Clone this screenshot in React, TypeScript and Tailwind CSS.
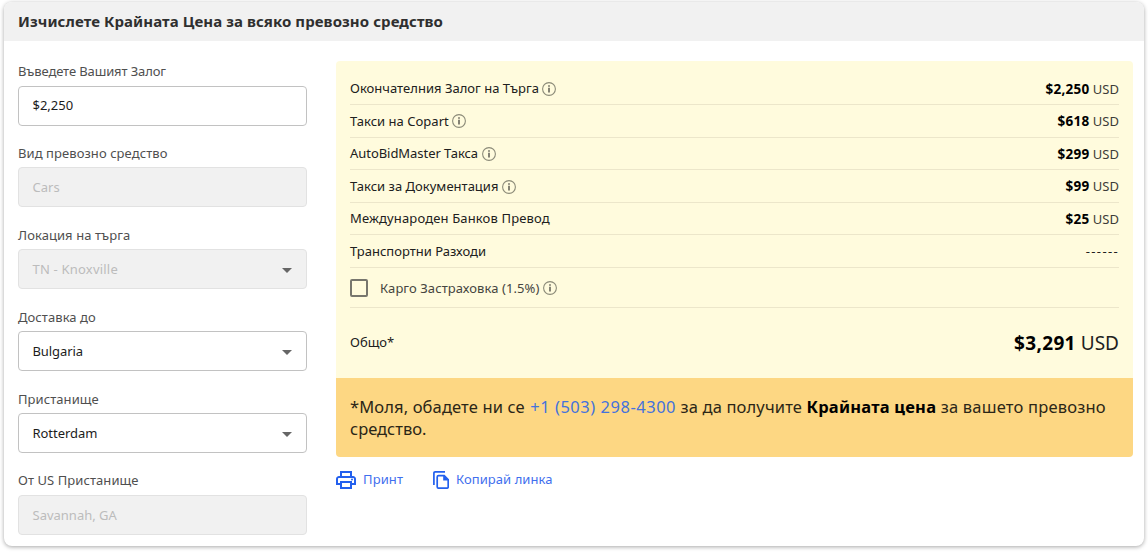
import { ReactNode } from "react";

function InfoIcon() {
  return (
    <svg className="ml-[3.5px] h-[14px] w-[14px] shrink-0" viewBox="0 0 14 14" fill="none">
      <circle cx="7" cy="7" r="6.4" stroke="#8b8a78" strokeWidth="1.1" />
      <path d="M7 5.7v4.8" stroke="#66655a" strokeWidth="1.6" />
      <path d="M7 3.3v1.5" stroke="#66655a" strokeWidth="1.6" />
    </svg>
  );
}

type FieldProps = {
  label: string;
  labelClass?: string;
  value: string;
  valueClass?: string;
  disabled?: boolean;
  select?: boolean;
};

function Field({ label, labelClass = "tracking-[0.07px]", value, valueClass = "", disabled, select }: FieldProps) {
  return (
    <div className="h-[81.9px]">
      <div className="flex h-[24.5px] items-start text-[13px] leading-[20px] text-[#4f4f4f]">
        <span className={labelClass}>{label}</span>
      </div>
      <div
        className={`flex h-[40px] w-[288.5px] items-center justify-between rounded-[4px] border pr-[14px] pl-[13.5px] text-[13px] ${
          disabled ? "border-[#e2e2e2] bg-[#f1f1f1] text-[#bcbcbc]" : "border-[#c2c2c2] bg-white text-[#1c1c1c]"
        }`}
      >
        <span className={`pt-px ${valueClass}`}>{value}</span>
        {select && (
          <svg className="mt-[2px] h-[5px] w-[10px]" viewBox="0 0 10 5">
            <path d="M0 0h10L5 5z" fill="#666" />
          </svg>
        )}
      </div>
    </div>
  );
}

type RowProps = { label: string; labelClass?: string; info?: boolean; children: ReactNode };

function Row({ label, labelClass = "tracking-[0.02px]", info, children }: RowProps) {
  return (
    <div className="flex h-[32.6px] items-center justify-between border-b border-[#ece6ca] text-[13px] text-[#202020]">
      <div className="flex items-center pt-px">
        <span className={labelClass}>{label}</span>
        {info && <InfoIcon />}
      </div>
      <div className="pt-px whitespace-nowrap">{children}</div>
    </div>
  );
}

function Price({ amount }: { amount: string }) {
  return (
    <span>
      <b className="text-[13.5px] font-bold tracking-[0.25px] text-black">{amount}</b>{" "}
      <span className="text-[#3c3c38]">USD</span>
    </span>
  );
}

export default function App() {
  return (
    <div className="h-[552px] w-[1148px] overflow-hidden bg-white pt-[2px] pl-[4px] font-['Noto_Sans','Open_Sans',sans-serif]">
      <div className="h-[544px] w-[1140px] overflow-hidden rounded-[8px] bg-white shadow-[0_1px_4px_rgba(0,0,0,0.35)]">
        <div className="flex h-[39px] items-center bg-[#f1f1f1] pl-[14px] text-[15px] font-bold tracking-[0.08px] text-[#2f2f2f]">
          <span>Изчислете Крайната Цена за всяко превозно средство</span>
        </div>
        <div className="flex pl-[14px]">
          <div className="w-[289px] pt-[20px]">
            <Field label="Въведете Вашият Залог" labelClass="tracking-[-0.12px]" value="$2,250" />
            <Field label="Вид превозно средство" value="Cars" disabled />
            <Field label="Локация на търга" value="TN - Knoxville" valueClass="tracking-[0.2px]" disabled select />
            <Field label="Доставка до" value="Bulgaria" valueClass="tracking-[-0.1px]" select />
            <Field label="Пристанище" value="Rotterdam" valueClass="tracking-[-0.05px]" select />
            <Field label="От US Пристанище" value="Savannah, GA" disabled />
          </div>
          <div className="ml-[29px] w-[797px] pt-[20px]">
            <div className="h-[317px] rounded-t-[4px] bg-[#fffbdd] px-[14px] pt-[11.5px]">
              <Row label="Окончателния Залог на Търга" info><Price amount="$2,250" /></Row>
              <Row label="Такси на Copart" info><Price amount="$618" /></Row>
              <Row label="AutoBidMaster Такса" labelClass="tracking-[-0.05px]" info><Price amount="$299" /></Row>
              <Row label="Такси за Документация" info><Price amount="$99" /></Row>
              <Row label="Международен Банков Превод" labelClass="tracking-[0.15px]"><Price amount="$25" /></Row>
              <Row label="Транспортни Разходи" labelClass="tracking-normal">
                <span className="tracking-[1.35px]">------</span>
              </Row>
              <div className="flex h-[40.4px] items-center border-b border-[#ece6ca] text-[13px] text-[#45453f]">
                <span className="h-[18px] w-[18px] rounded-[2px] border-2 border-[#77766d]" />
                <span className="ml-[12px] pt-px tracking-[0.08px]">Карго Застраховка (1.5%)</span>
                <InfoIcon />
              </div>
              <div className="flex h-[69px] items-center justify-between text-[13px] text-[#202020]">
                <span>Общо*</span>
                <span className="text-[19px]">
                  <b className="font-bold tracking-[0.35px] text-black">$3,291</b> <span>USD</span>
                </span>
              </div>
            </div>
            <div className="h-[78.5px] rounded-b-[4px] bg-[#fdd783] px-[14px] pt-[18px] text-[16.5px] leading-[22px] text-[#2b2617]">
              <div className="whitespace-nowrap">
                <span className="tracking-[0.13px]">*Моля, обадете ни се </span>
                <span className="ml-[1px] tracking-[0.52px] text-[#4472dc]">+1 (503) 298-4300</span>
                <span className="tracking-[0.15px]"> за да получите </span>
                <b className="font-bold tracking-[0.22px] text-black">Крайната цена</b>
                <span className="tracking-[0.2px]"> за вашето превозно</span>
              </div>
              <div>средство.</div>
            </div>
            <div className="flex h-[46px] items-center text-[13px] text-[#3f6fee]">
              <svg className="h-[18px] w-[20px]" viewBox="2 3 20 18" fill="#2360ee">
                <path d="M19 8h-1V3H6v5H5c-1.66 0-3 1.34-3 3v6h4v4h12v-4h4v-6c0-1.66-1.34-3-3-3zM8 5h8v3H8V5zm8 12v2H8v-4h8v2zm2-2v-2H6v2H4v-4c0-.55.45-1 1-1h14c.55 0 1 .45 1 1v4h-2z" />
                <circle cx="18" cy="11.5" r="1" />
              </svg>
              <span className="ml-[7px] tracking-[0.1px]">Принт</span>
              <svg className="ml-[29.5px] h-[18px] w-[16px]" viewBox="0 0 16 18" fill="none" stroke="#2360ee" strokeWidth="1.7">
                <path d="M.9 14V2.2Q.9.9 2.2.9H12" />
                <path d="M5.6 4.6h5.6l4 4v7.2q0 1.4-1.4 1.4H5.6q-1.4 0-1.4-1.4V6q0-1.4 1.4-1.4z" />
                <path d="M10.2 4v5.4h5.4z" fill="#2360ee" stroke="none" />
              </svg>
              <span className="ml-[7.5px] tracking-[0.06px]">Копирай линка</span>
            </div>
          </div>
        </div>
      </div>
    </div>
  );
}
